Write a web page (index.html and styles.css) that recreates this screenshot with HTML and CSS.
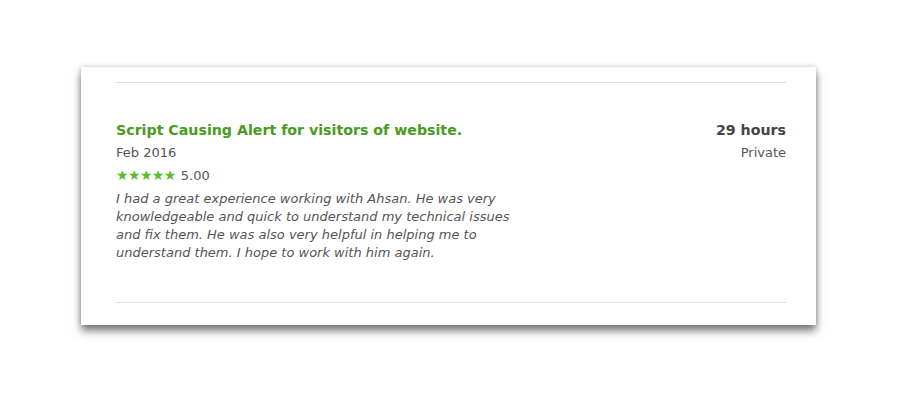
FILE: index.html
```html
<!DOCTYPE html>
<html>
<head>
<meta charset="utf-8">
<link rel="stylesheet" href="styles.css">
</head>
<body>
<div class="card">
  <div class="rule"></div>
  <div class="item">
    <div class="main">
      <h3 class="title">Script Causing Alert for visitors of website.</h3>
      <div class="date">Feb 2016</div>
      <div class="rating">
        <span class="stars">★★★★★</span>
        <span class="score">5.00</span>
      </div>
      <p class="review">I had a great experience working with Ahsan. He was very knowledgeable and quick to understand my technical issues and fix them. He was also very helpful in helping me to understand them. I hope to work with him again.</p>
    </div>
    <div class="side">
      <div class="hours">29 hours</div>
      <div class="kind">Private</div>
    </div>
  </div>
  <div class="rule"></div>
</div>
</body>
</html>
```

FILE: styles.css
```css
html, body {
  margin: 0;
  padding: 0;
  background: #fff;
}
body {
  font-family: "DejaVu Sans", "Liberation Sans", sans-serif;
  color: #555;
  padding: 67px 0 0 81px;
  min-height: 401px;
  box-sizing: border-box;
}
.card {
  width: 735px;
  height: 258px;
  box-sizing: border-box;
  padding: 15px 30px 0 35px;
  background: #fff;
  box-shadow: 0 6px 8px rgba(0,0,0,0.5), 0 0 5px rgba(0,0,0,0.2);
}
.rule {
  height: 1px;
  background: #e0e0e0;
}
.item {
  display: flex;
  justify-content: space-between;
  padding: 37px 0 0;
  height: 219px;
  box-sizing: border-box;
}
.main {
  width: 408px;
}
.title {
  margin: 0;
  font-size: 14.2px;
  line-height: 20px;
  font-weight: 700;
  color: #4a9b21;
}
.date {
  font-size: 13px;
  line-height: 22px;
  margin-top: 2px;
}
.rating {
  display: flex;
  align-items: center;
  gap: 5px;
  height: 22px;
  margin-bottom: 4px;
}
.stars {
  color: #5bbd2b;
  font-size: 14px;
  letter-spacing: -0.6px;
}
.score {
  font-size: 13px;
}
.review {
  margin: 0;
  font-size: 13px;
  line-height: 18px;
  font-style: italic;
  color: #555;
}
.side {
  text-align: right;
}
.hours {
  font-size: 14.2px;
  font-weight: 700;
  line-height: 20px;
  color: #444;
}
.kind {
  font-size: 13px;
  line-height: 22px;
  margin-top: 2px;
}
```
